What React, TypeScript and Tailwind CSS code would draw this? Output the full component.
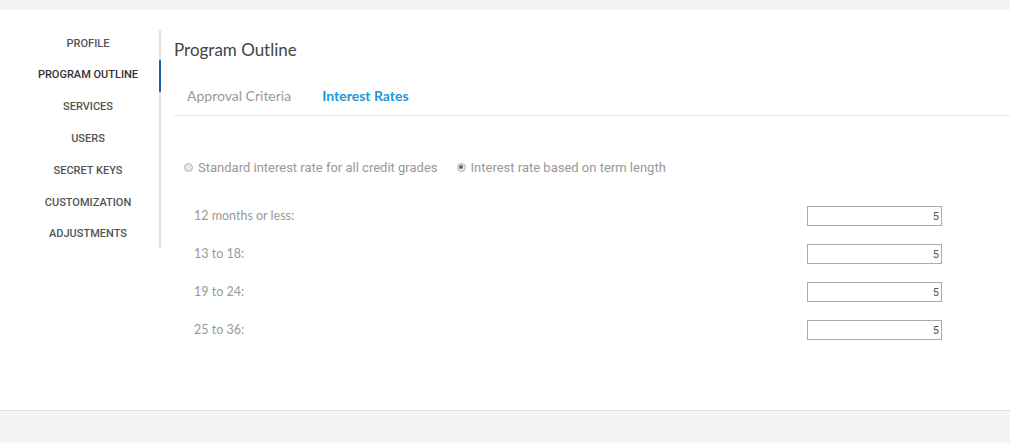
import { useState } from 'react';

const navItems = ['PROFILE', 'PROGRAM OUTLINE', 'SERVICES', 'USERS', 'SECRET KEYS', 'CUSTOMIZATION', 'ADJUSTMENTS'];
const rates = ['12 months or less:', '13 to 18:', '19 to 24:', '25 to 36:'];

function Radio({ checked, label }: { checked: boolean; label: string }) {
  return (
    <label className="flex items-center gap-[5px]">
      <span className="flex h-[9px] w-[9px] items-center justify-center rounded-full border border-[#b5b5b5] bg-[#e8e8e8]">
        {checked && <span className="h-[4px] w-[4px] rounded-full bg-[#666]" />}
      </span>
      <span>{label}</span>
    </label>
  );
}

export default function App() {
  const [active] = useState('PROGRAM OUTLINE');

  return (
    <div className="flex h-[443px] flex-col bg-[#f4f4f4] font-['Roboto',sans-serif]">
      <div className="h-[10px]" />
      <div className="flex h-[401px] bg-white border-b border-[#e0e0e0]">
        <nav className="mt-[20px] h-[218px] w-[161px] border-r-2 border-[#e2e2e2]">
          <div className="-mt-[2px] flex flex-col">
            {navItems.map((item) => (
              <div
                key={item}
                className={
                  '-mr-[2px] flex h-[31.8px] shrink-0 items-center justify-center pl-[17px] text-[11px] font-medium ' +
                  (item === active ? 'border-r-2 border-[#1e64a8] text-[#333]' : 'pr-[2px] text-[#555]')
                }
              >
                {item}
              </div>
            ))}
          </div>
        </nav>

        <main className="flex-1 pl-[13px]">
          <h1 className="mt-[27px] font-['Lato',sans-serif] text-[17px] text-[#444]">Program Outline</h1>
          <div className="mt-[22px] flex h-[31px] gap-[31px] border-b border-[#e8e8e8] pl-[13px] font-['Lato',sans-serif] text-[14px]">
            <span className="text-[#999]">Approval Criteria</span>
            <span className="font-bold text-[#1a9ad6]">Interest Rates</span>
          </div>

          <div className="mt-[42px] flex gap-[19px] pl-[10px] text-[13px] text-[#999]">
            <Radio checked={false} label="Standard interest rate for all credit grades" />
            <Radio checked label="Interest rate based on term length" />
          </div>

          <div className="mt-[29px] flex w-[768px] flex-col gap-[18px] pl-[20px]">
            {rates.map((r) => (
              <div key={r} className="flex h-[20px] items-center justify-between">
                <span className="font-['Lato',sans-serif] text-[12.5px] text-[#999]">{r}</span>
                <input
                  readOnly
                  value="5"
                  className="h-[20px] w-[135px] border border-[#aaa] px-[2px] text-right text-[11px] text-[#555] outline-none"
                />
              </div>
            ))}
          </div>
        </main>
      </div>
    </div>
  );
}
